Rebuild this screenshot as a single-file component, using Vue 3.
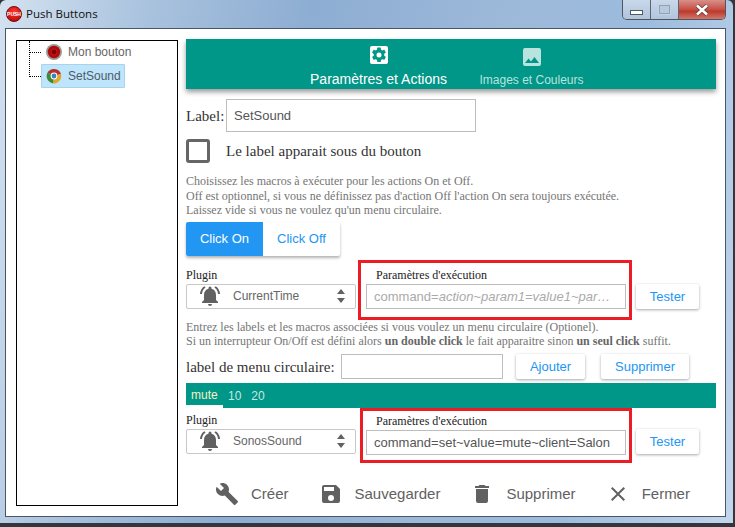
<script setup>
const help1 = [
  "Choisissez les macros à exécuter pour les actions On et Off.",
  "Off est optionnel, si vous ne définissez pas d'action Off l'action On sera toujours exécutée.",
  "Laissez vide si vous ne voulez qu'un menu circulaire.",
];
</script>

<template>
  <div class="window">
    <div class="titlebar">
      <svg class="app-icon" viewBox="0 0 16 16" width="16" height="16">
        <defs>
          <radialGradient id="redball" cx="50%" cy="35%" r="65%">
            <stop offset="0" stop-color="#ff3a30" />
            <stop offset="1" stop-color="#c00808" />
          </radialGradient>
        </defs>
        <circle cx="8" cy="8" r="7.5" fill="url(#redball)" stroke="#6a1010" stroke-width="1" />
        <text x="8" y="10" text-anchor="middle" font-size="5" font-weight="700" font-family="Liberation Sans, sans-serif" fill="#fff">PUSH</text>
      </svg>
      <span class="title">Push Buttons</span>
      <div class="controls">
        <div class="ctl">
          <span class="min-glyph"></span>
        </div>
        <div class="ctl">
          <span class="max-glyph"></span>
        </div>
        <div class="ctl close">
          <svg viewBox="0 0 16 12" width="16" height="12">
            <path d="M3 1.5l10 9M13 1.5l-10 9" stroke="#5a3a3a" stroke-width="4" fill="none" />
            <path d="M3 1.5l10 9M13 1.5l-10 9" stroke="#fff" stroke-width="2.6" fill="none" />
          </svg>
        </div>
      </div>
    </div>

    <div class="client">
      <div class="tree">
        <div class="tree-lines"></div>
        <div class="tree-item">
          <span class="dots"></span>
          <svg class="node-icon" viewBox="0 0 16 16" width="16" height="16">
            <circle cx="8" cy="8" r="8" fill="#9a9a9a" />
            <circle cx="8" cy="8" r="6.2" fill="#b00a0a" />
            <circle cx="8" cy="8" r="3" fill="#7a0505" stroke="#d02020" stroke-width="0.8" />
          </svg>
          <span class="node-text">Mon bouton</span>
        </div>
        <div class="tree-item selected">
          <span class="dots"></span>
          <div class="node-box">
            <svg class="node-icon" viewBox="0 0 16 16" width="16" height="16">
              <path d="M8 8L1.5 4.5A7.5 7.5 0 0 1 15 6z" fill="#b8322a" />
              <path d="M8 8L15 6A7.5 7.5 0 0 1 7 15.4z" fill="#e0a82a" />
              <path d="M8 8L7 15.4A7.5 7.5 0 0 1 1.5 4.5z" fill="#3e8a36" />
              <circle cx="8" cy="8" r="3.4" fill="#fff" />
              <circle cx="8" cy="8" r="2.4" fill="#3a80c8" />
            </svg>
            <span class="node-text">SetSound</span>
          </div>
        </div>
      </div>

      <div class="main">
        <div class="tabs">
          <div class="tab active">
            <svg viewBox="0 0 24 24" width="24" height="24">
              <path fill-rule="evenodd" d="M19 3H5a2 2 0 0 0-2 2v14a2 2 0 0 0 2 2h14a2 2 0 0 0 2-2V5a2 2 0 0 0-2-2zm-1.75 9c0 .23-.02.46-.05.68l1.48 1.16c.13.11.17.3.08.45l-1.4 2.42c-.09.15-.27.21-.43.15l-1.74-.7c-.36.28-.76.51-1.18.69l-.26 1.85c-.03.17-.18.3-.35.3h-2.8a.35.35 0 0 1-.35-.29l-.26-1.85c-.43-.18-.82-.41-1.18-.69l-1.74.7c-.16.06-.34 0-.43-.15l-1.4-2.42a.35.35 0 0 1 .08-.45l1.48-1.16a5.6 5.6 0 0 1 0-1.36L5.3 9.71a.35.35 0 0 1-.08-.45l1.4-2.42c.09-.15.27-.21.43-.15l1.74.7c.36-.28.76-.51 1.18-.69l.26-1.85c.03-.17.18-.3.35-.3h2.8c.17 0 .32.13.35.29l.26 1.85c.43.18.82.41 1.18.69l1.74-.7c.16-.06.34 0 .43.15l1.4 2.42c.09.15.05.34-.08.45L17.2 10.86c.03.66.05.91.05 1.14zM12 9.5a2.5 2.5 0 1 0 0 5 2.5 2.5 0 0 0 0-5z" fill="#fff" />
            </svg>
            <span>Paramètres et Actions</span>
          </div>
          <div class="tab">
            <svg viewBox="0 0 24 24" width="24" height="24">
              <path d="M21 19V5a2 2 0 0 0-2-2H5a2 2 0 0 0-2 2v14a2 2 0 0 0 2 2h14a2 2 0 0 0 2-2zM8.5 13.5l2.5 3 3.5-4.5 4.5 6H5z" fill="#b9e3de" />
            </svg>
            <span>Images et Couleurs</span>
          </div>
        </div>

        <div class="label-row">
          <span class="label-text">Label:</span>
          <div class="field label-input">SetSound</div>
        </div>

        <div class="check-row">
          <span class="check"></span>
          <span class="check-text">Le label apparait sous du bouton</span>
        </div>

        <p class="help help-first">
          <template v-for="line in help1" :key="line">{{ line }}<br /></template>
        </p>

        <div class="toggle">
          <div class="toggle-btn on">Click On</div>
          <div class="toggle-btn">Click Off</div>
        </div>

        <div class="plugin-row">
          <div class="plugin">
            <div class="small-label">Plugin</div>
            <div class="select">
              <svg viewBox="0 0 24 24" width="24" height="24">
                <path d="M12 22a2 2 0 0 0 2-2h-4a2 2 0 0 0 2 2zm6-6v-5c0-3.1-1.6-5.6-4.5-6.3V4a1.5 1.5 0 0 0-3 0v.7C7.6 5.4 6 7.9 6 11v5l-2 2v1h16v-1zM7.6 3.6 6.2 2.2A10.4 10.4 0 0 0 2 10h2a8.4 8.4 0 0 1 3.6-6.4zM20 10h2a10.4 10.4 0 0 0-4.2-7.8l-1.4 1.4A8.4 8.4 0 0 1 20 10z" fill="#616161" />
              </svg>
              <span class="select-text">CurrentTime</span>
              <span class="updown"><i class="up"></i><i class="down"></i></span>
            </div>
          </div>
          <div class="red-box">
            <div class="small-label params">Paramètres d'exécution</div>
            <div class="field param-input placeholder">
              <span class="ph-text">command=<em>action~param1=value1~par…</em></span>
            </div>
          </div>
          <div class="btn">Tester</div>
        </div>

        <p class="help help-second">
          Entrez les labels et les macros associées si vous voulez un menu circulaire (Optionel).<br />
          Si un interrupteur On/Off est défini alors <b>un double click</b> le fait apparaitre sinon <b>un seul click</b> suffit.
        </p>

        <div class="menu-row">
          <span class="menu-label">label de menu circulaire:</span>
          <div class="field menu-input"></div>
          <div class="btn add">Ajouter</div>
          <div class="btn del">Supprimer</div>
        </div>

        <div class="menu-bar">
          <span class="menu-tab current">mute</span>
          <span class="menu-tab">10</span>
          <span class="menu-tab">20</span>
        </div>

        <div class="plugin-row second">
          <div class="plugin">
            <div class="small-label">Plugin</div>
            <div class="select">
              <svg viewBox="0 0 24 24" width="24" height="24">
                <path d="M12 22a2 2 0 0 0 2-2h-4a2 2 0 0 0 2 2zm6-6v-5c0-3.1-1.6-5.6-4.5-6.3V4a1.5 1.5 0 0 0-3 0v.7C7.6 5.4 6 7.9 6 11v5l-2 2v1h16v-1zM7.6 3.6 6.2 2.2A10.4 10.4 0 0 0 2 10h2a8.4 8.4 0 0 1 3.6-6.4zM20 10h2a10.4 10.4 0 0 0-4.2-7.8l-1.4 1.4A8.4 8.4 0 0 1 20 10z" fill="#616161" />
              </svg>
              <span class="select-text">SonosSound</span>
              <span class="updown"><i class="up"></i><i class="down"></i></span>
            </div>
          </div>
          <div class="red-box">
            <div class="small-label params">Paramètres d'exécution</div>
            <div class="field param-input">command=set~value=mute~client=Salon</div>
          </div>
          <div class="btn">Tester</div>
        </div>

        <div class="actions">
          <div class="action">
            <svg viewBox="0 0 24 24" width="24" height="24">
              <path d="M22.7 19l-9.1-9.1c.9-2.3.4-5-1.5-6.9-2-2-5-2.4-7.4-1.3L9 6 6 9 1.6 4.7C.4 7.1.9 10.1 2.9 12.1c1.9 1.9 4.6 2.4 6.9 1.5l9.1 9.1c.4.4 1 .4 1.4 0l2.3-2.3c.5-.4.5-1.1.1-1.4z" fill="#616161" />
            </svg>
            <span>Créer</span>
          </div>
          <div class="action">
            <svg viewBox="0 0 24 24" width="24" height="24">
              <path d="M17 3H5a2 2 0 0 0-2 2v14a2 2 0 0 0 2 2h14a2 2 0 0 0 2-2V7l-4-4zm-5 16a3 3 0 1 1 0-6 3 3 0 0 1 0 6zm3-10H5V5h10v4z" fill="#616161" />
            </svg>
            <span>Sauvegarder</span>
          </div>
          <div class="action">
            <svg viewBox="0 0 24 24" width="24" height="24">
              <path d="M6 19a2 2 0 0 0 2 2h8a2 2 0 0 0 2-2V7H6v12zM19 4h-3.5l-1-1h-5l-1 1H5v2h14V4z" fill="#616161" />
            </svg>
            <span>Supprimer</span>
          </div>
          <div class="action">
            <svg viewBox="0 0 24 24" width="24" height="24">
              <path d="M19 6.41 17.59 5 12 10.59 6.41 5 5 6.41 10.59 12 5 17.59 6.41 19 12 13.41 17.59 19 19 17.59 13.41 12z" fill="#616161" />
            </svg>
            <span>Fermer</span>
          </div>
        </div>
      </div>
    </div>
  </div>
</template>

<style>
html,
body {
  margin: 0;
  background: #33373d;
}
</style>

<style scoped>
.window {
  width: 733px;
  height: 523px;
  box-sizing: border-box;
  overflow: hidden;
  padding: 0 7px 0 5px;
  background: linear-gradient(100deg, #d4e2f0 0%, #a9c2de 18%, #8dadd2 38%, #9db9da 62%, #9cbbdd 78%, #c3d6ec 100%);
  font-family: "Liberation Sans", Arial, sans-serif;
  display: flex;
  flex-direction: column;
  border-radius: 6px 6px 0 0;
}

.titlebar {
  height: 28px;
  flex: none;
  display: flex;
  align-items: center;
  gap: 4px;
  padding-bottom: 1px;
  box-sizing: border-box;
  position: relative;
}

.app-icon {
  margin-left: 1px;
}

.title {
  font-family: "Open Sans", "DejaVu Sans", sans-serif;
  font-size: 11.5px;
  color: #111;
}

.controls {
  position: absolute;
  top: 0;
  right: 0;
  display: flex;
  height: 19px;
  border: 1px solid #50565f;
  border-top: none;
  border-radius: 0 0 5px 5px;
  overflow: hidden;
}

.ctl {
  width: 27px;
  height: 19px;
  display: flex;
  align-items: center;
  justify-content: center;
  background: linear-gradient(#c9d8ea, #b0c4dc);
  border-right: 1px solid #5b6470;
}

.ctl.close {
  width: 46px;
  border-right: none;
  background: linear-gradient(#d8908a 0%, #c8564c 45%, #bd3a2a 60%, #d0786e 100%);
}

.min-glyph {
  width: 11px;
  height: 3px;
  margin-top: 5px;
  background: #fff;
  border: 1px solid #4c5966;
}

.max-glyph {
  width: 9px;
  height: 7px;
  border: 1px solid #8ea2b8;
  outline: 1px solid #c3d1e1;
  background: #b7c9de;
}

.client {
  width: 721px;
  height: 489px;
  flex: none;
  box-sizing: border-box;
  background: #fff;
  border: 1px solid #49566a;
  display: flex;
  padding: 11px 8px 0 10px;
  gap: 8px;
}

.tree {
  width: 162px;
  height: 466px;
  flex: none;
  box-sizing: border-box;
  border: 1px solid #000;
  position: relative;
  display: flex;
  flex-direction: column;
  padding-top: 0;
  font-size: 12px;
}

.tree-lines {
  position: absolute;
  left: 12px;
  top: 0;
  height: 36px;
  border-left: 1px dotted #000;
}

.tree-item {
  height: 24px;
  display: flex;
  align-items: center;
  padding-left: 12px;
}

.tree-lines + .tree-item {
  margin-top: -1px;
}

.dots {
  width: 12px;
  flex: none;
  border-top: 1px dotted #000;
}

.tree-item > .node-icon {
  margin-left: 5px;
}

.node-box {
  height: 24px;
  box-sizing: border-box;
  width: 84px;
  padding-left: 4px;
  display: flex;
  align-items: center;
  background: #bee5fb;
  border: 1px solid #a8d4ea;
  border-radius: 1px;
}

.node-text {
  margin-left: 6px;
  color: #666;
}

.selected .node-text {
  color: #4f5b66;
}

.main {
  width: 530px;
  flex: none;
  margin-top: -1px;
}

.tabs {
  height: 50px;
  background: #009688;
  box-shadow: 0 3px 5px rgba(0, 0, 0, 0.4);
  display: flex;
  padding-left: 111px;
  box-sizing: border-box;
}

.tab {
  display: flex;
  flex-direction: column;
  align-items: center;
  justify-content: flex-end;
  padding-bottom: 2px;
  box-sizing: border-box;
  color: #b9e3de;
  font-size: 12px;
  width: 143px;
}

.tab svg {
  margin-bottom: 4px;
}

.tab.active {
  width: 163px;
  color: #fff;
  font-size: 14px;
}

.label-row {
  display: flex;
  align-items: center;
  margin-top: 10px;
  height: 33px;
}

.label-text {
  font-family: "Liberation Serif", serif;
  font-size: 15px;
  width: 40px;
  color: #333;
  padding-top: 2px;
}

.field {
  box-sizing: border-box;
  border: 1px solid #bdbdbd;
  font-size: 13px;
  color: #555;
  display: flex;
  align-items: center;
  padding-left: 7px;
  white-space: nowrap;
  overflow: hidden;
}

.label-input {
  width: 250px;
  height: 33px;
}

.check-row {
  display: flex;
  align-items: center;
  gap: 16px;
  margin-top: 6px;
  height: 25px;
  font-family: "Liberation Serif", serif;
  font-size: 15px;
  color: #333;
}

.check-text {
  padding-top: 2px;
}

.check {
  width: 24px;
  height: 24px;
  box-sizing: border-box;
  border: 3px solid #666;
  border-radius: 3px;
}

.help {
  margin: 0;
  font-family: "Liberation Serif", serif;
  font-size: 12px;
  line-height: 14.5px;
  color: #757575;
}

.help-first {
  margin-top: 11px;
}

.help b {
  color: #666;
}

.toggle {
  display: flex;
  width: 154px;
  height: 34px;
  margin-top: 4px;
  box-shadow: 0 2px 3px rgba(0, 0, 0, 0.3);
  border-radius: 2px;
}

.toggle-btn {
  width: 77px;
  display: flex;
  align-items: center;
  justify-content: center;
  font-size: 13px;
  color: #2196f3;
}

.toggle-btn.on {
  background: #2196f3;
  color: #fff;
  border-radius: 2px 0 0 2px;
}

.plugin-row {
  display: flex;
  align-items: flex-end;
  margin-top: 4px;
  height: 60px;
}

.plugin {
  width: 170px;
  margin-bottom: 11px;
}

.small-label {
  font-family: "Liberation Serif", serif;
  font-size: 12px;
  color: #222;
  line-height: 14px;
  margin-bottom: 2px;
}

.select {
  box-sizing: border-box;
  height: 25px;
  border: 1px solid #c8c8c8;
  border-radius: 2px;
  display: flex;
  align-items: center;
  padding-left: 11px;
  position: relative;
}

.select-text {
  font-size: 12px;
  color: #666;
  margin-left: 11px;
}

.updown {
  position: absolute;
  right: 10px;
  top: 4px;
  display: flex;
  flex-direction: column;
  gap: 4px;
}

.up {
  border-left: 4px solid transparent;
  border-right: 4px solid transparent;
  border-bottom: 5px solid #616161;
}

.down {
  border-left: 4px solid transparent;
  border-right: 4px solid transparent;
  border-top: 5px solid #616161;
}

.red-box {
  box-sizing: border-box;
  width: 274px;
  height: 60px;
  margin-left: 2px;
  border: 3px solid #ec1c24;
  padding: 5px 5px 0 5px;
}

.params {
  padding-left: 10px;
}

.param-input {
  width: 260px;
  height: 25px;
}

.placeholder {
  color: #aaa;
}

.ph-text em {
  font-style: italic;
}

.btn {
  box-sizing: border-box;
  height: 25px;
  display: flex;
  align-items: center;
  justify-content: center;
  font-size: 13px;
  color: #2196f3;
  background: #fff;
  border-radius: 2px;
  box-shadow: 0 1px 3px rgba(0, 0, 0, 0.35);
}

.plugin-row > .btn {
  width: 63px;
  margin-left: 4px;
  margin-bottom: 11px;
}

.help-second {
  margin-top: 0;
}

.menu-row {
  display: flex;
  align-items: center;
  height: 25px;
  margin-top: 5px;
}

.menu-label {
  font-family: "Liberation Serif", serif;
  font-size: 15px;
  color: #333;
  width: 155px;
  white-space: nowrap;
  padding-top: 2px;
}

.menu-input {
  width: 162px;
  height: 25px;
}

.btn.add {
  width: 69px;
  margin-left: 13px;
}

.btn.del {
  width: 88px;
  margin-left: 16px;
}

.menu-bar {
  height: 25px;
  margin-top: 4px;
  background: #009688;
  display: flex;
  align-items: stretch;
  font-size: 12px;
  color: #c4e8e3;
}

.menu-tab {
  padding: 2px 5px 0;
  display: flex;
  align-items: center;
  box-sizing: border-box;
}

.menu-tab.current {
  color: #f6f2c4;
  border-bottom: 3px solid #fff;
  width: 37px;
}

.plugin-row.second {
  margin-top: 0;
  height: 55px;
}

.plugin-row.second .plugin,
.plugin-row.second .btn {
  margin-bottom: 9px;
}

.plugin-row.second .red-box {
  height: 55px;
  padding: 3px 5px 0 3px;
  width: 272px;
  margin-left: 4px;
}

.actions {
  display: flex;
  align-items: center;
  margin-top: 17px;
  padding-left: 29px;
  height: 28px;
  font-size: 15px;
  color: #616161;
}

.action {
  display: flex;
  align-items: center;
  gap: 12px;
  margin-right: 30px;
}
</style>
